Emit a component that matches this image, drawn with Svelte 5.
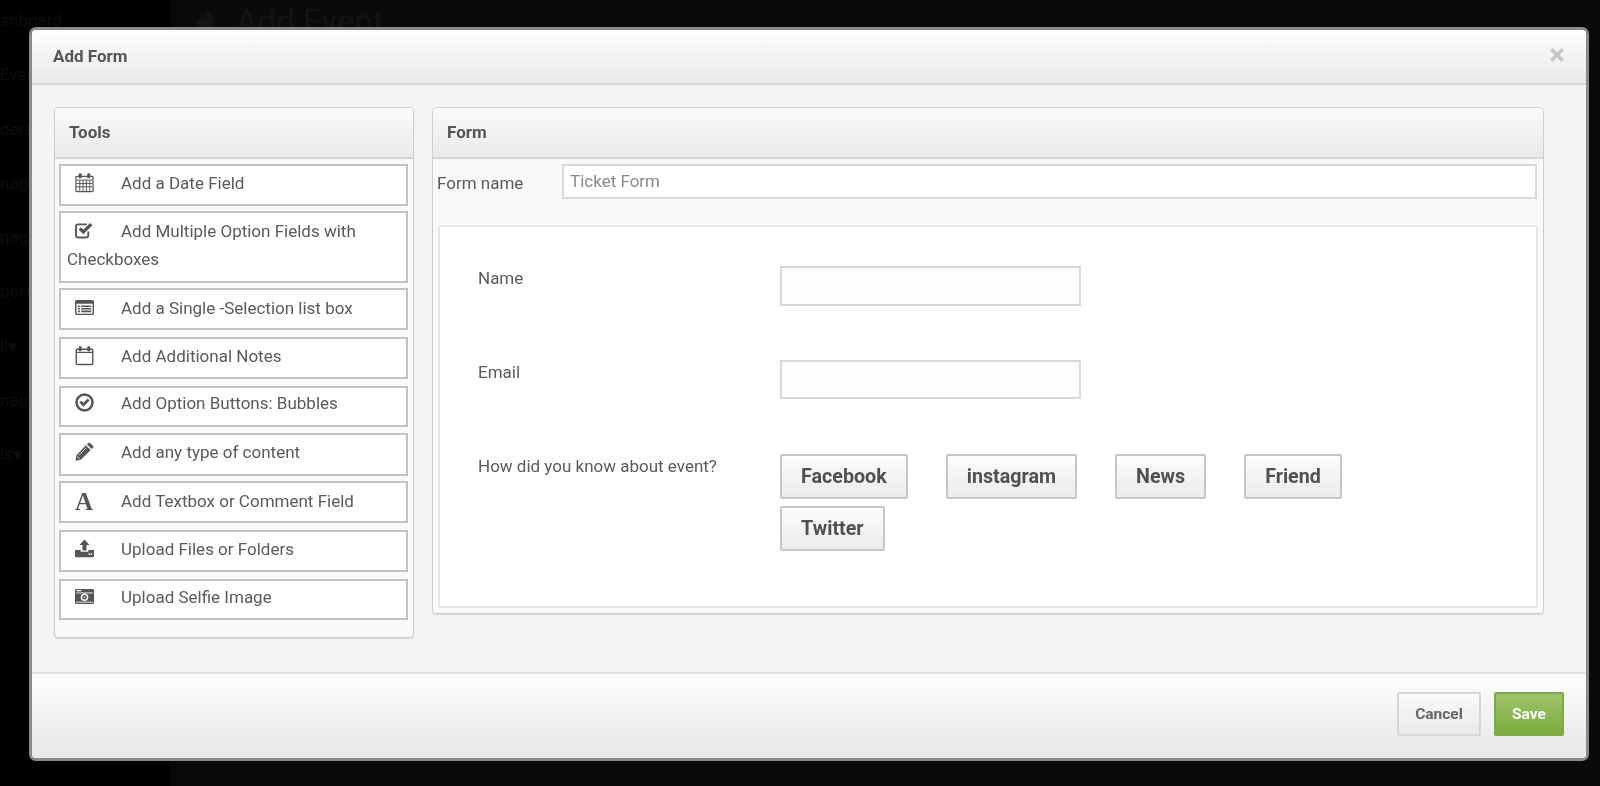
<script>
  const tools = [
    { icon: 'calendar', label: 'Add a Date Field', h: 42, gap: 5, top: 3 },
    { icon: 'check', label: 'Add Multiple Option Fields with Checkboxes', h: 72, gap: 5, top: 4 },
    { icon: 'list', label: 'Add a Single -Selection list box', h: 42, gap: 7, top: 4 },
    { icon: 'blank', label: 'Add Additional Notes', h: 42, gap: 7, top: 3 },
    { icon: 'circle', label: 'Add Option Buttons: Bubbles', h: 41, gap: 6, top: 1 },
    { icon: 'pencil', label: 'Add any type of content', h: 43, gap: 5, top: 3 },
    { icon: 'font', label: 'Add Textbox or Comment Field', h: 42, gap: 7, top: 4 },
    { icon: 'upload', label: 'Upload Files or Folders', h: 42, gap: 7, top: 3 },
    { icon: 'camera', label: 'Upload Selfie Image', h: 41, gap: 0, top: 2 }
  ];
  const choices = ['Facebook', 'instagram', 'News', 'Friend', 'Twitter'];
  const sideItems = ['shboard', 'Event', 'ders', 'nage', 'nage', 'port', 'll▾', 'nage', 'ls▾'];
</script>

<div class="page">
  <aside class="side">
    {#each sideItems as item}
      <div class="side-item">{item}</div>
    {/each}
  </aside>
  <div class="gutter"></div>
  <div class="rule"></div>
  <div class="behind">
    <svg class="drop" viewBox="0 0 20 30" aria-hidden="true"><path d="M11 0c1 6 8 10 8 18a9 9 0 0 1-18 0c0-5 3-7 5-10 1 2 1 3 2 4 2-3 3-7 3-12z" /></svg>
    <span>Add Event</span>
  </div>

  <div class="modal">
    <header class="modal-head">
      <h1>Add Form</h1>
      <svg class="close" viewBox="0 0 14 14" aria-hidden="true"><path d="M2.600 0 7 4.400 11.400 0 14 2.600 9.600 7 14 11.400 11.400 14 7 9.600 2.600 14 0 11.400 4.400 7 0 2.600z" /></svg>
    </header>

    <div class="modal-body">
      <section class="panel tools">
        <h2 class="panel-head">Tools</h2>
        <ul class="tool-list">
          {#each tools as t}
            <li class="tool" style:height="{t.h}px" style:margin-bottom="{t.gap}px" style:padding-top="{t.top}px">
              <span class="ico">
                {#if t.icon === 'calendar'}
                  <svg viewBox="0 0 19 20"><path d="M1.500 3.500h16a1 1 0 0 1 1 1v14a1 1 0 0 1-1 1h-16a1 1 0 0 1-1-1v-14a1 1 0 0 1 1-1z" fill="none" stroke-width="1.300"/><path d="M1 7.500h17M1 11h17M1 14.500h17M4.500 7.500v12M8 7.500v12M11.500 7.500v12M15 7.500v12" fill="none" stroke-width="1"/><rect x="3.400" y="0.200" width="3.200" height="5.300" rx="1.400" /><rect x="12.400" y="0.200" width="3.200" height="5.300" rx="1.400" /></svg>
                {:else if t.icon === 'check'}
                  <svg viewBox="0 0 20 17"><path d="M14 9.500v4.100a2.200 2.200 0 0 1-2.200 2.200H3.200A2.200 2.200 0 0 1 1 13.600V4.200A2.200 2.200 0 0 1 3.200 2h9.300" fill="none" stroke-width="2"/><path d="M3.800 7.400 6.200 5l2.500 2.600L15.900.6 18.400 3 8.700 12.400z" /></svg>
                {:else if t.icon === 'list'}
                  <svg viewBox="0 0 20 16"><path fill-rule="evenodd" d="M2 0h16a2 2 0 0 1 2 2v12a2 2 0 0 1-2 2H2a2 2 0 0 1-2-2V2a2 2 0 0 1 2-2zm-.5 4v9.600c0 .6.400 .9.900 .9h15.200c.5 0 .9-.3.900-.9V4zM3 5.800h2.200v1.700H3zm3.500 0H17v1.700H6.500zM3 8.500h2.200v1.700H3zm3.500 0H17v1.700H6.500zM3 11.200h2.200v1.700H3zm3.500 0H17v1.700H6.500z"/></svg>
                {:else if t.icon === 'blank'}
                  <svg viewBox="0 0 19 20"><path d="M1.800 3.500h15.400a1 1 0 0 1 1 1v14a1 1 0 0 1-1 1H1.800a1 1 0 0 1-1-1v-14a1 1 0 0 1 1-1z" fill="none" stroke-width="1.500"/><path d="M1 6.800h17" fill="none" stroke-width="1.300"/><rect x="3.400" y="0.200" width="3.200" height="5.300" rx="1.400" /><rect x="12.400" y="0.200" width="3.200" height="5.300" rx="1.400" /></svg>
                {:else if t.icon === 'circle'}
                  <svg viewBox="0 0 17 17"><circle cx="8.500" cy="8.500" r="7.200" fill="none" stroke-width="2.200"/><path d="M3.900 8.600 5.600 6.900 7.500 8.800 11.400 4.900 13.100 6.600 7.500 12.200z"/></svg>
                {:else if t.icon === 'pencil'}
                  <svg viewBox="0 0 17 17"><path d="M12 .8a1 1 0 0 1 1.400 0l2.800 2.800a1 1 0 0 1 0 1.400l-1.300 1.300-4.200-4.200zM9.800 3 14 7.200 5.300 15.900.5 16.800 1.200 12z"/><path d="M3.500 11.800 10.300 5M1.700 12.600l2.800 2.800" fill="none" stroke-width=".7" class="hi"/></svg>
                {:else if t.icon === 'font'}
                  <span class="font-a">A</span>
                {:else if t.icon === 'upload'}
                  <svg viewBox="0 0 19 18"><path d="M9.500 0 14.500 5.600h-3V11h-4V5.600h-3zM0 10.500h5.700v1.800h7.600v-1.800H19v6a1.300 1.300 0 0 1-1.300 1.300H1.300A1.300 1.300 0 0 1 0 16.500z"/><path d="M13.500 13.800h1.500v1.500h-1.500zm2.300 0h1.500v1.500h-1.500z" fill="#fff"/></svg>
                {:else}
                  <svg viewBox="0 0 20 16"><rect width="20" height="16" rx="1.500"/><rect x="1.500" y="1.200" width="5" height="1.300" fill="#fff"/><rect x="1.200" y="3.800" width="17.600" height=".9" fill="#fff"/><rect x="1.200" y="13.500" width="17.600" height=".9" fill="#fff"/><circle cx="10" cy="8.800" r="4" fill="#eee"/><circle cx="10" cy="8.800" r="2.300"/><circle cx="10" cy="8.800" r="1" fill="#bbb"/></svg>
                {/if}
              </span>{t.label}
            </li>
          {/each}
        </ul>
      </section>

      <section class="panel form">
        <h2 class="panel-head">Form</h2>
        <div class="name-row">
          <label for="fname">Form name</label>
          <input id="fname" placeholder="Ticket Form" />
        </div>
        <div class="preview">
          <div class="field name">
            <span class="lbl">Name</span>
            <input class="box" aria-label="Name" />
          </div>
          <div class="field email">
            <span class="lbl">Email</span>
            <input class="box" aria-label="Email" />
          </div>
          <div class="field how">
            <span class="lbl">How did you know about event?</span>
            <div class="choices">
              {#each choices as c}
                <button class="choice">{c}</button>
              {/each}
            </div>
          </div>
        </div>
      </section>
    </div>

    <footer class="modal-foot">
      <button class="btn cancel">Cancel</button>
      <button class="btn save">Save</button>
    </footer>
  </div>
</div>

<style>
  :global(body) { margin: 0; background: #0a0a0a; font-family: Roboto, "Liberation Sans", sans-serif; color: #555; }
  * { box-sizing: border-box; }
  .page { position: relative; width: 1600px; height: 786px; overflow: hidden; background: #0a0a0a; }
  .side { position: absolute; left: 0; top: 0; bottom: 0; width: 170px; background: #000; padding-top: 7px; }
  .side-item { height: 54.300px; line-height: 26px; white-space: nowrap; font-size: 17px; color: #0e0e0e; }
  .gutter { position: absolute; left: 170px; top: 0; bottom: 0; width: 7px; background: #070707; }
  .rule { position: absolute; left: 467px; top: 760px; bottom: 0; width: 1px; background: #060606; }
  .behind { position: absolute; left: 197px; top: 0; display: flex; align-items: center; gap: 21px; font-size: 33px; color: #131313; height: 42px; }
  .drop { width: 18px; height: 28px; fill: #131313; }

  .modal { position: absolute; left: 29px; top: 27px; width: 1560px; height: 734px; background: #f4f4f4; border: 3px solid #8a8a8a; border-radius: 7px; display: flex; flex-direction: column; overflow: hidden; filter: blur(.35px); }
  .modal-head { height: 55px; flex: none; background: linear-gradient(#fdfdfd, #e9e9e9); border-bottom: 2px solid #d6d6d6; display: flex; align-items: center; justify-content: space-between; padding: 0 21px; }
  h1 { margin: 0; font-size: 17px; font-weight: 700; color: #555; position: relative; top: -1px; }
  .close { width: 14px; height: 14px; fill: #c6c6c6; margin-right: 1px; position: relative; top: -2px; }

  .modal-body { flex: 1; display: flex; align-items: flex-start; padding: 22px 0 0 22px; gap: 18px; }
  .panel { background: #f9f9f9; border: 1px solid #cfcfcf; border-radius: 4px; box-shadow: 0 1px 1px #d8d8d8; overflow: hidden; }
  .panel-head { margin: 0; height: 51px; background: linear-gradient(#fbfbfb, #e9e9e9); border-bottom: 2px solid #d4d4d4; font-size: 17px; font-weight: 700; color: #555; line-height: 48px; padding-left: 14px; }

  .tools { width: 360px; height: 531px; }
  .tool-list { list-style: none; margin: 5px 5px 0 4px; padding: 0; }
  .tool { background: #fff; border: 2px solid #c2c2c2; font-size: 17px; line-height: 28px; color: #5a5a5a; padding: 3px 6px 0 6px; }
  .ico { display: inline-flex; width: 54px; height: 20px; vertical-align: -3px; padding-left: 8px; align-items: flex-start; }
  .ico svg { width: 19px; height: 19px; fill: #555; stroke: #555; stroke-width: 0; overflow: visible; }
  .ico svg .hi { stroke: #fff; }
  .font-a { font-family: "Liberation Serif", serif; font-weight: 700; font-size: 25px; line-height: 20px; color: #555; }

  .form { width: 1112px; height: 507px; }
  .name-row { display: flex; align-items: flex-start; height: 66px; padding: 5px 5px 0 4px; }
  .name-row label { width: 125px; font-size: 17px; line-height: 38px; color: #5a5a5a; }
  .name-row input { width: 975px; height: 35px; border: 2px solid #d8d8d8; background: #fff; padding: 0 6px 2px; font: 17px Roboto, sans-serif; color: #555; }
  .name-row input::placeholder { color: #8a8a8a; opacity: 1; }
  .preview { margin: 0 5px; height: 383px; background: #fff; border: 2px solid #e6e6e6; border-radius: 3px; padding: 39px 0 0 38px; }
  .field { display: flex; align-items: flex-start; }
  .field.name { height: 94px; }
  .field.email { height: 94px; }
  .lbl { width: 302px; font-size: 17px; color: #5a5a5a; line-height: 24px; }
  .box { width: 301px; height: 40px; border: 2px solid #d8d8d8; background: #fdfdfd; }
  .field.email .box { height: 39px; }
  .choices { display: flex; flex-wrap: wrap; width: 610px; row-gap: 7px; column-gap: 38px; }
  .choice { height: 45px; padding: 0 19px; background: linear-gradient(#fcfcfc, #ebebeb); border: 2px solid #c6c6c6; border-radius: 2px; font: 700 19.700px Roboto, sans-serif; color: #505050; }

  .modal-foot { height: 86px; flex: none; background: linear-gradient(#fdfdfd, #e7e7e7); border-top: 2px solid #e0e0e0; display: flex; justify-content: flex-end; align-items: flex-start; gap: 13px; padding: 18px 22px 0 0; }
  .btn { height: 44px; border-radius: 2px; font: 700 15.500px Roboto, sans-serif; }
  .cancel { width: 84px; background: linear-gradient(#fafafa, #e9e9e9); border: 2px solid #d6d6d6; color: #666; }
  .save { width: 70px; background: linear-gradient(#9dc46c, #7cab3e); border: 2px solid #7aa948; color: #fff; }
</style>
